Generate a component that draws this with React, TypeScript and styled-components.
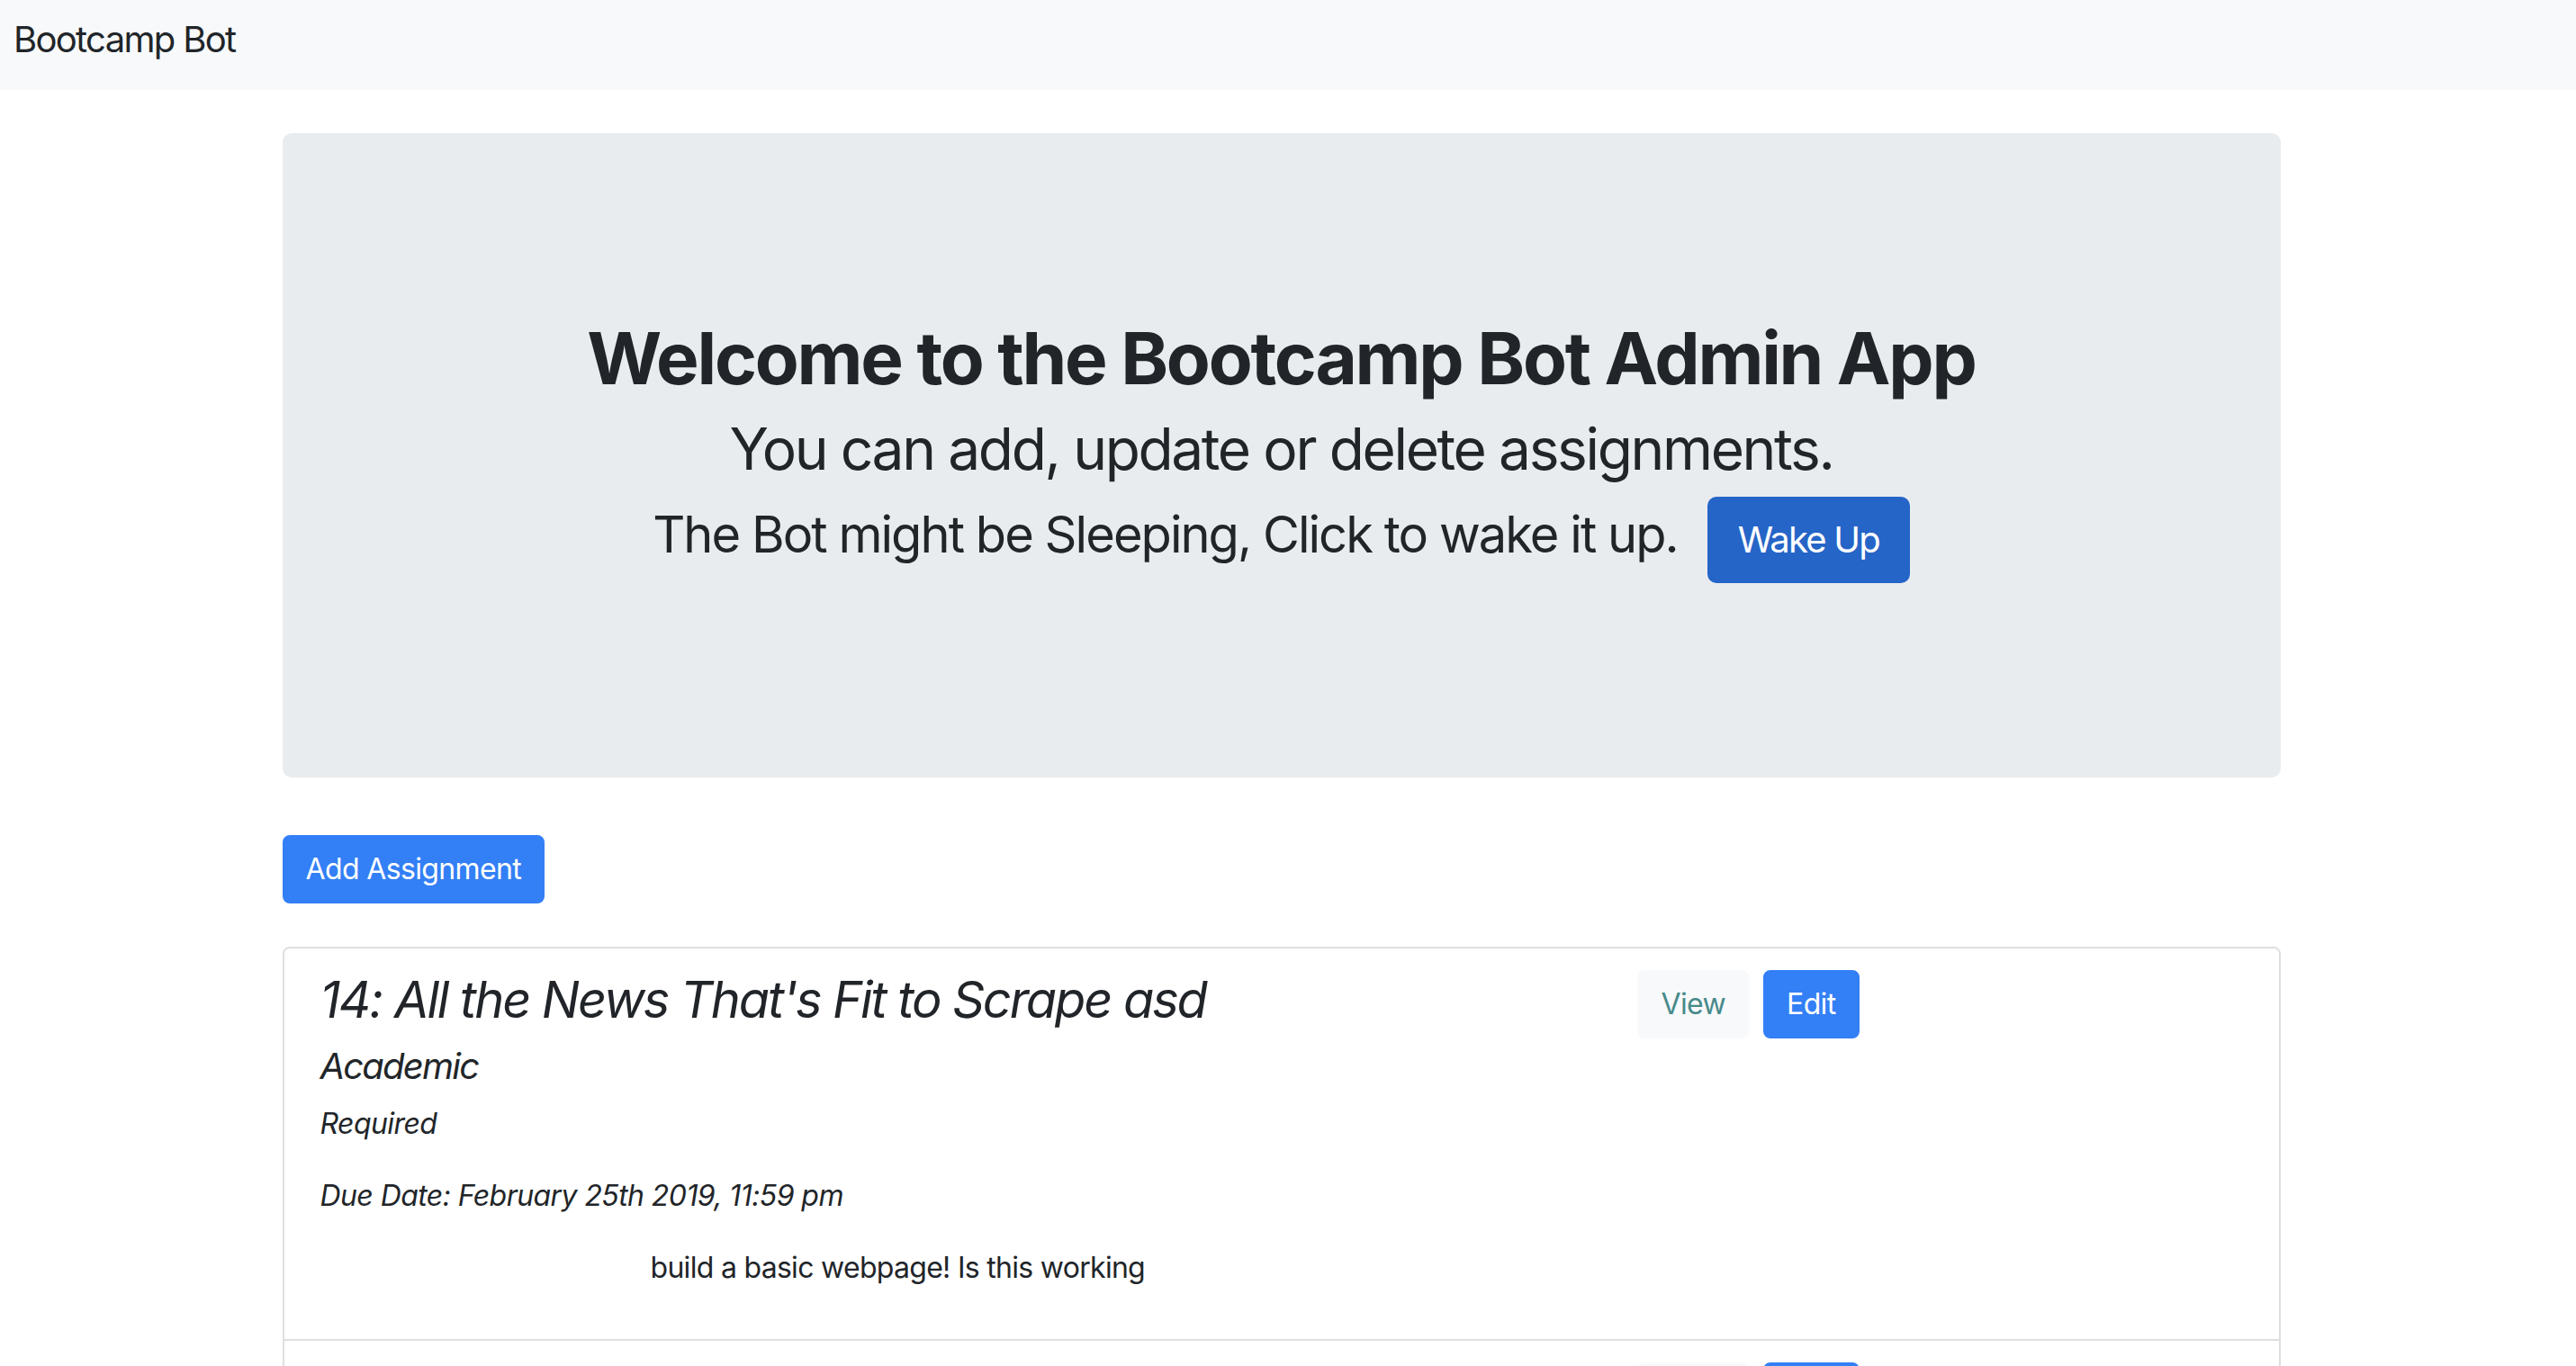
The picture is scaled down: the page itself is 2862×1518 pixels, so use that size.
import React from "react";
import styled, { createGlobalStyle } from "styled-components";

const GlobalStyle = createGlobalStyle`
  html, body {
    margin: 0;
    padding: 0;
    overflow: hidden;
    background: #ffffff;
  }
  body {
    font-family: Inter, "Noto Sans", "Liberation Sans", sans-serif;
    color: #212529;
  }
  *, *::before, *::after { box-sizing: border-box; }
`;

const Navbar = styled.nav`
  height: 100px;
  background: #f8f9fa;
  padding: 17px 0 0 15px;
`;

const Brand = styled.a`
  display: inline-block;
  font-size: 40px;
  line-height: 54px;
  letter-spacing: -0.042em;
  color: #212529;
  text-decoration: none;
`;

const Main = styled.main`
  padding-right: 15px;
`;

const Container = styled.div`
  max-width: 2280px;
  margin: 0 auto;
  padding: 48px 30px 0;
`;

const Jumbotron = styled.section`
  height: 716px;
  background: #e9ecef;
  border-radius: 10px;
  padding: 202px 64px 0;
  text-align: center;
`;

const Title = styled.h1`
  margin: 0;
  font-size: 80px;
  line-height: 96px;
  font-weight: 700;
  letter-spacing: -0.028em;
`;

const Subtitle = styled.h2`
  margin: 14px 0 0;
  font-size: 64px;
  line-height: 78px;
  font-weight: 400;
  letter-spacing: -0.037em;
`;

const WakeRow = styled.div`
  margin-top: 14px;
  display: flex;
  justify-content: center;
  align-items: baseline;
  gap: 33px;
`;

const WakeText = styled.h3`
  margin: 0;
  font-size: 56px;
  line-height: 67px;
  font-weight: 400;
  letter-spacing: -0.035em;
`;

const Button = styled.button<{ $variant: "primary" | "dark" | "light"; $size?: "lg" }>`
  font-family: inherit;
  font-weight: 400;
  cursor: pointer;
  border: 2px solid transparent;
  font-size: ${(p) => (p.$size === "lg" ? "40px" : "32px")};
  line-height: ${(p) => (p.$size === "lg" ? "60px" : "48px")};
  letter-spacing: ${(p) => (p.$size === "lg" ? "-0.045em" : "-0.02em")};
  padding: ${(p) => (p.$size === "lg" ? "16px 32px" : "12px 24px")};
  border-radius: ${(p) => (p.$size === "lg" ? "10px" : "8px")};
  background: ${(p) =>
    p.$variant === "primary" ? "#337ff6" : p.$variant === "dark" ? "#2565c7" : "#f8f9fa"};
  border-color: ${(p) =>
    p.$variant === "primary" ? "#337ff6" : p.$variant === "dark" ? "#2565c7" : "#f8f9fa"};
  color: ${(p) => (p.$variant === "light" ? "#478a8b" : "#ffffff")};
`;

const AddBar = styled.div`
  margin-top: 64px;
`;

const List = styled.div`
  margin-top: 48px;
  display: flex;
  flex-direction: column;
`;

const Item = styled.article`
  border: 2px solid #dfdfdf;
  padding: 24px 40px;
  & + & {
    margin-top: -2px;
  }
  &:first-child {
    border-top-left-radius: 8px;
    border-top-right-radius: 8px;
  }
  display: grid;
  grid-template-columns: calc((100% + 60px) * 8 / 12 - 60px) 1fr;
  column-gap: 60px;
`;

const Details = styled.div`
  display: flex;
  flex-direction: column;
`;

const ItemTitle = styled.h3`
  margin: 0 0 16px;
  font-size: 56px;
  line-height: 67px;
  font-weight: 400;
  font-style: italic;
  letter-spacing: -0.038em;
`;

const Category = styled.h5`
  margin: 0 0 16px;
  font-size: 40px;
  line-height: 48px;
  font-weight: 400;
  font-style: italic;
  letter-spacing: -0.045em;
`;

const Meta = styled.p`
  margin: 0 0 32px;
  font-size: 32px;
  line-height: 48px;
  font-style: italic;
  letter-spacing: -0.018em;
`;

const Description = styled.p`
  margin: 0 0 31px;
  padding-left: 367px;
  font-size: 32px;
  line-height: 48px;
  letter-spacing: -0.022em;
`;

const Actions = styled.div`
  display: flex;
  align-items: flex-start;
  gap: 16px;
`;

const assignments = [
  {
    title: "14: All the News That's Fit to Scrape asd",
    category: "Academic",
    required: "Required",
    due: "Due Date: February 25th 2019, 11:59 pm",
    description: "build a basic webpage! Is this working",
  },
  {
    title: "13: Mongo Scraper",
    category: "Academic",
    required: "Required",
    due: "Due Date: February 18th 2019, 11:59 pm",
    description: "scrape some news",
  },
];

export default function App() {
  return (
    <>
      <GlobalStyle />
      <Navbar>
        <Brand href="#">Bootcamp Bot</Brand>
      </Navbar>
      <Main>
        <Container>
          <Jumbotron>
            <Title>Welcome to the Bootcamp Bot Admin App</Title>
            <Subtitle>You can add, update or delete assignments.</Subtitle>
            <WakeRow>
              <WakeText>The Bot might be Sleeping, Click to wake it up.</WakeText>
              <Button $variant="dark" $size="lg">Wake Up</Button>
            </WakeRow>
          </Jumbotron>
          <AddBar>
            <Button $variant="primary">Add Assignment</Button>
          </AddBar>
          <List>
            {assignments.map((a) => (
              <Item key={a.title}>
                <Details>
                  <ItemTitle>{a.title}</ItemTitle>
                  <Category>{a.category}</Category>
                  <Meta>{a.required}</Meta>
                  <Meta>{a.due}</Meta>
                  <Description>{a.description}</Description>
                </Details>
                <Actions>
                  <Button $variant="light">View</Button>
                  <Button $variant="primary">Edit</Button>
                </Actions>
              </Item>
            ))}
          </List>
        </Container>
      </Main>
    </>
  );
}
